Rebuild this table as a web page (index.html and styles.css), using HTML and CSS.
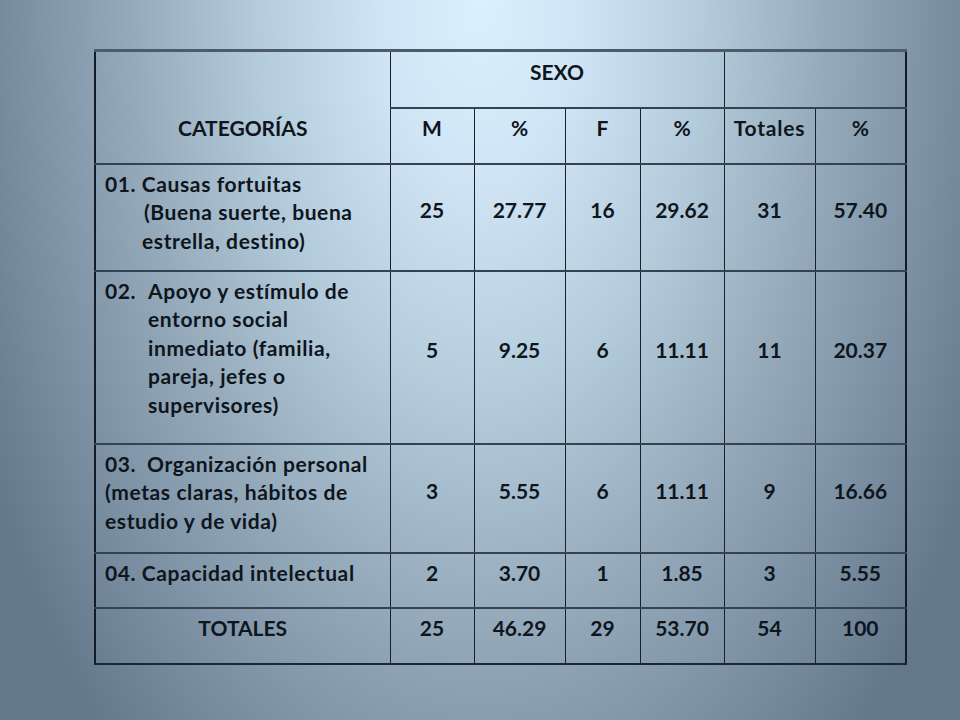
FILE: index.html
```html
<!DOCTYPE html>
<html lang="es">
<head>
<meta charset="utf-8">
<title>Categorías</title>
<link rel="stylesheet" href="styles.css">
</head>
<body>
<div class="slide">
  <table class="data">
    <colgroup>
      <col class="c-cat"><col class="c-m"><col class="c-p1"><col class="c-f"><col class="c-p2"><col class="c-t"><col class="c-p3">
    </colgroup>
    <tr class="r-h1">
      <td class="cat-head" rowspan="2">CATEGORÍAS</td>
      <td class="num" colspan="4">SEXO</td>
      <td class="num" colspan="2"></td>
    </tr>
    <tr class="r-h2">
      <td class="num">M</td>
      <td class="num">%</td>
      <td class="num">F</td>
      <td class="num">%</td>
      <td class="num wide">Totales</td>
      <td class="num">%</td>
    </tr>
    <tr class="r-1">
      <td class="cat">
        <div>01. Causas fortuitas</div>
        <div class="ind-a">(Buena suerte, buena</div>
        <div class="ind-b">estrella, destino)</div>
      </td>
      <td class="num">25</td>
      <td class="num">27.77</td>
      <td class="num">16</td>
      <td class="num">29.62</td>
      <td class="num">31</td>
      <td class="num">57.40</td>
    </tr>
    <tr class="r-2">
      <td class="cat">
        <div class="hang">
          <span class="lbl">02.</span>
          <div class="lines">
            <div>Apoyo y estímulo de</div>
            <div>entorno social</div>
            <div>inmediato (familia,</div>
            <div>pareja, jefes o</div>
            <div>supervisores)</div>
          </div>
        </div>
      </td>
      <td class="num">5</td>
      <td class="num">9.25</td>
      <td class="num">6</td>
      <td class="num">11.11</td>
      <td class="num">11</td>
      <td class="num">20.37</td>
    </tr>
    <tr class="r-3">
      <td class="cat">
        <div><span class="lbl3">03.</span>Organización personal</div>
        <div>(metas claras, hábitos de</div>
        <div>estudio y de vida)</div>
      </td>
      <td class="num">3</td>
      <td class="num">5.55</td>
      <td class="num">6</td>
      <td class="num">11.11</td>
      <td class="num">9</td>
      <td class="num">16.66</td>
    </tr>
    <tr class="r-4">
      <td class="cat">04. Capacidad intelectual</td>
      <td class="num">2</td>
      <td class="num">3.70</td>
      <td class="num">1</td>
      <td class="num">1.85</td>
      <td class="num">3</td>
      <td class="num">5.55</td>
    </tr>
    <tr class="r-5">
      <td class="num">TOTALES</td>
      <td class="num">25</td>
      <td class="num">46.29</td>
      <td class="num">29</td>
      <td class="num">53.70</td>
      <td class="num">54</td>
      <td class="num">100</td>
    </tr>
  </table>
</div>
</body>
</html>
```
FILE: styles.css
```css
html, body {
  margin: 0;
  padding: 0;
}
body {
  width: 960px;
  height: 720px;
  overflow: hidden;
}
.slide {
  width: 960px;
  height: 720px;
  box-sizing: border-box;
  padding: 49px 0 0 94px;
  background:
    radial-gradient(ellipse 560px 1000px at 50% 0%, #dbf0fe 0%, #cfe5f5 18%, #b4cbdb 40%, #95abbc 62%, #7b90a2 82%, #63788a 100%);
  font-family: Lato, "Open Sans", "Liberation Sans", sans-serif;
  font-weight: 700;
  font-size: 21px;
  line-height: 28.5px;
  color: #0e151c;
}
.data {
  border-collapse: collapse;
  table-layout: fixed;
  width: 811px;
}
.c-cat { width: 295px; }
.c-m { width: 84px; }
.c-p1 { width: 91px; }
.c-f { width: 75px; }
.c-p2 { width: 84px; }
.c-t { width: 91px; }
.c-p3 { width: 91px; }
.data td {
  border: 1px solid #17222d;
  border-top: 2px solid #34434f;
  border-bottom: 2px solid #34434f;
  padding: 0;
}
.data tr:first-child td {
  border-top: 3px solid #4c5c69;
}
.data tr:last-child td {
  border-bottom: 2px solid #1a2835;
}
.data td:first-child {
  border-left: 2px solid #111c26;
}
.data .r-h2 td:first-child {
  border-left: 1px solid #17222d;
}
.data td:last-child {
  border-right: 2px solid #111c26;
}
.r-h1 { height: 57px; }
.r-h2 { height: 56px; }
.r-1 { height: 107px; }
.r-2 { height: 173px; }
.r-3 { height: 109px; }
.r-4 { height: 55px; }
.r-5 { height: 56px; }
.num {
  text-align: center;
  vertical-align: middle;
  padding: 0 0 14px 0 !important;
}
.wide {
  letter-spacing: 0.8px;
}
.cat-head {
  text-align: center;
  vertical-align: bottom;
  padding: 0 0 20px 0 !important;
}
.cat {
  vertical-align: top;
  padding: 5px 0 0 9px !important;
  white-space: nowrap;
  letter-spacing: 0.6px;
}
.ind-a { padding-left: 39px; }
.ind-b { padding-left: 37px; }
.hang {
  display: flex;
}
.lbl {
  width: 43px;
  flex: none;
}
.lbl3 {
  display: inline-block;
  width: 42px;
}
```
